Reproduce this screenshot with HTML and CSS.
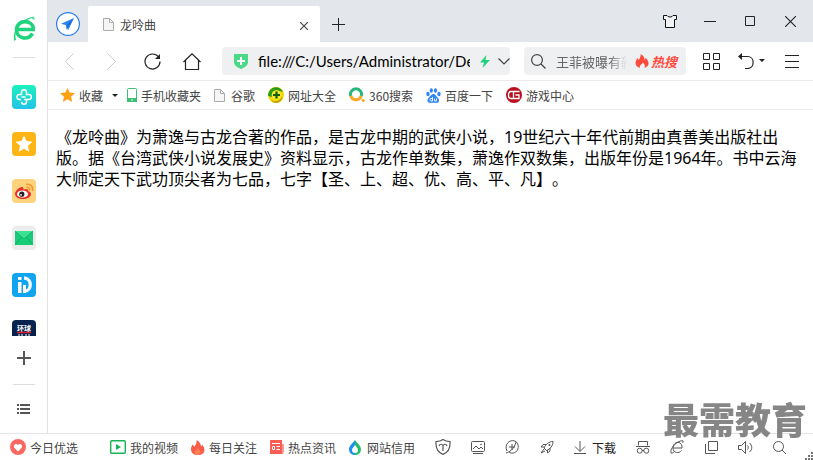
FILE: index.html
```html
<!DOCTYPE html>
<html lang="zh-CN">
<head>
  <meta charset="UTF-8">
  <title>龙呤曲</title>
  <link rel="stylesheet" href="styles.css">
</head>
<body>
  <div class="workspace">
    <aside class="sidebar">
      <div class="logo">
        <svg width="22" height="26" viewBox="0 0 22 26"><path d="M5 13.500h15.500C20 3 4 3 3.500 13.500 3.200 22.500 15 25 19.500 17.500" fill="none" stroke="#1fd47c" stroke-width="3.600"/><path d="M1.500 25C-2 17 8 2.500 20 .8c1.500.5 1.800 2 1 3.700-.3-2.300-2-2.600-4-1.700C9 5.500 0 15.500 3 23.500z" fill="#1fd47c"/></svg>
      </div>
      <div class="divider"></div>
      <nav class="apps">
        <button class="app" aria-label="医疗">
          <svg width="24" height="24" viewBox="0 0 24 24"><defs><linearGradient id="med" x2="0" y2="1"><stop stop-color="#1df0bd"/><stop offset="1" stop-color="#1fc3e8"/></linearGradient></defs><rect width="24" height="24" rx="4" fill="url(#med)"/><path d="M9 14.500H7.500a2.500 2.500 0 0 1 0-5h2V7.200a2.500 2.500 0 0 1 5 0v2.300h2.300a2.500 2.500 0 0 1 0 5h-2.300v2.300a2.500 2.500 0 0 1-5 0M9.500 12h4M14.500 14.500h-2.500" fill="none" stroke="#fff" stroke-width="1.500"/></svg>
        </button>
        <button class="app" aria-label="收藏夹">
          <svg width="24" height="24" viewBox="0 0 24 24"><rect width="24" height="24" rx="4" fill="#fdb515"/><path d="M12 3.500l2.500 5.600 6 .7-4.500 4 1.200 6L12 16.800l-5.200 3 1.200-6-4.500-4 6-.7z" fill="#fff"/></svg>
        </button>
        <button class="app" aria-label="微博">
          <svg width="24" height="24" viewBox="0 0 24 24"><rect width="24" height="24" rx="4" fill="#ffd27d"/><path d="M3 15c0-3 4-7 7-7 1.500 0 1.700 1.500 1.300 2.500 2.500-1 5.200-1 4.700 1.500 2 .5 3 1.500 3 3 0 3-4 5-8 5s-8-2-8-5z" fill="#e6322b"/><ellipse cx="10.500" cy="15" rx="5.500" ry="3.600" fill="#fff"/><circle cx="9.800" cy="15.200" r="2.600" fill="#222"/><circle cx="9" cy="15.800" r=".9" fill="#fff"/><path d="M14 5.500c4-1 7.500 2 6.500 6.500M14.500 8.500c2.200-.3 3.500 1 3 3" fill="none" stroke="#f0992c" stroke-width="1.600"/></svg>
        </button>
        <button class="app" aria-label="邮件">
          <svg width="24" height="24" viewBox="0 0 24 24"><rect width="24" height="24" rx="4" fill="#ececec"/><path d="M3 5h18v14H3z" fill="#18cd78"/><path d="M3 5h18l-9 8z" fill="#3be292"/><path d="M3 5l9 8 9-8M3 19l6.500-8M21 19l-6.500-8" fill="none" stroke="#10a961" stroke-width=".8"/></svg>
        </button>
        <button class="app" aria-label="iD">
          <svg width="24" height="24" viewBox="0 0 24 24"><rect width="24" height="24" rx="4" fill="#11a4f0"/><path d="M6 4h3.500v3H6zM6 9h3.500v11H6zM11 12h3v8h-3z" fill="#fff"/><path d="M12 5.200h1c7 .8 7 12 0 13" fill="none" stroke="#fff" stroke-width="3.200"/></svg>
        </button>
        <button class="app" aria-label="环球时报">
          <svg width="24" height="24" viewBox="0 0 24 24"><rect width="24" height="24" rx="4" fill="#07234d"/><text class="paper" x="5" y="11">环球</text><path d="M7 14v2M10 14v2M14 14v2M17 14v2" stroke="#fff"/><path d="M5 12.500h14" stroke="#e51c2c" stroke-width="1.500"/></svg>
        </button>
      </nav>
      <button class="side-add" aria-label="添加">
        <svg width="14" height="14" viewBox="0 0 14 14"><path d="M7 0v14M0 7h14" stroke="#555" stroke-width="2"/></svg>
      </button>
      <div class="divider"></div>
      <button class="side-list" aria-label="列表">
        <svg width="13" height="10" viewBox="0 0 13 10"><path d="M0 1h2M3 1h10M0 5h2M3 5h10M0 9h2M3 9h10" stroke="#555" stroke-width="2"/></svg>
      </button>
    </aside>

    <div class="browser">
      <header class="tabbar">
        <button class="compass" aria-label="导航">
          <svg width="24" height="24" viewBox="0 0 24 24"><circle cx="12" cy="12" r="11.400" fill="#fff" stroke="#2b7de9" stroke-width="1.200"/><path d="M18 6L5 11.800l5.300 1.500L12 18.500z" fill="#2b86f5"/><path d="M18 6l-7.700 7.300v4.200l2.500-3z" fill="#1b6bdc"/></svg>
        </button>
        <div class="tab">
          <svg width="11" height="13" viewBox="0 0 11 13"><path d="M.5.500h6l4 4v8H.500zM6.500.500v4h4" fill="#f6f6f6" stroke="#aaa"/></svg>
          <span class="tab-title">龙呤曲</span>
          <button class="tab-close" aria-label="关闭标签">
            <svg width="8" height="8" viewBox="0 0 8 8"><path d="M0 0l8 8M8 0L0 8" stroke="#444" stroke-width="1.100"/></svg>
          </button>
        </div>
        <button class="new-tab" aria-label="新标签">
          <svg width="13" height="13" viewBox="0 0 13 13"><path d="M6.500 0v13M0 6.500h13" stroke="#222"/></svg>
        </button>
        <div class="window-controls">
          <button aria-label="皮肤"><svg width="14" height="13" viewBox="0 0 14 13"><path d="M.5.500h3.500c.5 2 5.500 2 6 0h3.500v4h-2v8h-9v-8h-2z" fill="#f3f4f6" stroke="#111"/></svg></button>
          <button aria-label="最小化"><svg width="12" height="11" viewBox="0 0 12 11"><path d="M0 5.500h12" stroke="#222"/></svg></button>
          <button aria-label="最大化"><svg width="10" height="10" viewBox="0 0 10 10"><path d="M.5.500h9v9h-9z" fill="none" stroke="#222"/></svg></button>
          <button aria-label="关闭"><svg width="11" height="11" viewBox="0 0 11 11"><path d="M0 0l11 11M11 0L0 11" stroke="#222" stroke-width="1.100"/></svg></button>
        </div>
      </header>

      <div class="toolbar">
        <button class="nav-btn" aria-label="后退"><svg width="9" height="17" viewBox="0 0 9 17"><path d="M8.500.500l-8 8 8 8" fill="none" stroke="#ccc"/></svg></button>
        <button class="nav-btn" aria-label="前进"><svg width="9" height="17" viewBox="0 0 9 17"><path d="M.5.500l8 8-8 8" fill="none" stroke="#ccc"/></svg></button>
        <button class="nav-btn narrow" aria-label="刷新"><svg width="17" height="17" viewBox="0 0 17 17"><path d="M14.500 4A7.500 7.500 0 1 0 16 8.500" fill="none" stroke="#222" stroke-width="1.200"/><path d="M16 1v5h-5z" fill="#222"/></svg></button>
        <button class="nav-btn narrow" aria-label="主页"><svg width="18" height="17" viewBox="0 0 18 17"><path d="M.5 9L9 .8 17.500 9M2.500 7.500v9h13v-9" fill="none" stroke="#222" stroke-width="1.200"/></svg></button>
        <div class="address">
          <svg width="14" height="16" viewBox="0 0 14 16"><path d="M0 1h14v8c0 4-4 5.500-7 7-3-1.500-7-3-7-7z" fill="#4bd987"/><path d="M7 4v8M3 8h8" stroke="#fff" stroke-width="2"/></svg>
          <input class="url" type="text" aria-label="地址" value="file:///C:/Users/Administrator/Desktop">
          <svg width="10" height="13" viewBox="0 0 10 13"><path d="M6.500 0L0 7.500h4L2.500 13 10 5H5.500z" fill="#1fd07c"/></svg>
          <button class="drop" aria-label="展开"><svg width="12" height="7" viewBox="0 0 12 7"><path d="M.5.500L6 6l5.500-5.500" fill="none" stroke="#444" stroke-width="1.200"/></svg></button>
        </div>
        <div class="search">
          <svg width="15" height="15" viewBox="0 0 15 15"><circle cx="6" cy="6" r="5.400" fill="none" stroke="#444" stroke-width="1.200"/><path d="M10 10l4.500 4.500" stroke="#444" stroke-width="1.200"/></svg>
          <input class="query" type="text" aria-label="搜索" value="王菲被曝有新">
          <a class="hot" href="#">
            <svg width="14" height="14" viewBox="0 0 14 14"><path d="M5 14C1 13 0 10 .8 7.500 1.500 6 2 5.500 1.800 4c1 .5 1.500 1 1.700 2C5 4.500 6 2.500 5.500 0c3 1.500 4 3.500 4 6 .8-.5 1.200-1.300 1-2.500 4 4 4.500 8.500-1 10.500 1-2.500 0-4-2-5.500C8 10.500 4 10.500 5 14z" fill="#ff4b3e"/></svg>热搜
          </a>
        </div>
        <button class="tool-btn" aria-label="扩展"><svg width="17" height="17" viewBox="0 0 17 17"><path d="M.5.500h6v6h-6zM10.500.500h6v6h-6zM.5 10.500h6v6h-6zM10.500 10.500h6v6h-6z" fill="none" stroke="#222"/></svg></button>
        <button class="tool-btn" aria-label="恢复">
          <svg width="27" height="16" viewBox="0 0 27 16"><path d="M2 3.500h7.500c7.500 0 7.500 12 0 12H7" fill="none" stroke="#222" stroke-width="1.200"/><path d="M0 3.500L4 0v7zM21 6h6l-3 3z" fill="#222"/></svg>
        </button>
        <button class="tool-btn" aria-label="菜单"><svg width="14" height="13" viewBox="0 0 14 13"><path d="M0 .5h14M0 6.500h14M0 12.500h14" stroke="#222"/></svg></button>
      </div>

      <nav class="bookmarks">
        <a href="#"><svg width="15" height="14" viewBox="0 0 15 14"><path d="M7.500 0l2.200 4.600 5.300.6-4 3.500 1.200 5.300-4.700-2.700L2.800 14 4 8.700 0 5.200l5.300-.6z" fill="#ffa114"/></svg>收藏</a>
        <button class="caret" aria-label="更多收藏"><svg width="6" height="3" viewBox="0 0 6 3"><path d="M0 0h6L3 3z" fill="#222"/></svg></button>
        <a href="#"><svg width="10" height="14" viewBox="0 0 10 14"><rect x=".5" y=".5" width="9" height="13" rx="1" fill="#fff" stroke="#3bbf72"/><path d="M0 10h10v4H0z" fill="#3bbf72"/><path d="M4 12h2" stroke="#fff"/></svg>手机收藏夹</a>
        <a class="page-link" href="#"><svg width="11" height="13" viewBox="0 0 11 13"><path d="M.5.500h6l4 4v8H.500zM6.500.500v4h4" fill="#f6f6f6" stroke="#aaa"/></svg>谷歌</a>
        <a href="#"><svg width="16" height="16" viewBox="0 0 16 16"><circle cx="8" cy="8" r="8" fill="#f6d800"/><path d="M3 2c4-3 10-2 12 3l-4-1C7 3 4 6 4 10L0 9c0-3 1-5 3-7z" fill="#2c9b16"/><path d="M3 13c5 3 10 0 11-4 1 3-2 7-6 7-2 0-4-1-5-3z" fill="#bda400"/><circle cx="8.500" cy="8" r="4.800" fill="#f9e82a"/><path d="M8.500 4.500v7M5 8h7" stroke="#145b10" stroke-width="2.200"/></svg>网址大全</a>
        <a href="#"><svg width="16" height="16" viewBox="0 0 16 16"><path d="M1.800 9A5.500 5.500 0 1 1 12.200 9" fill="none" stroke="#26b779" stroke-width="3"/><path d="M1.800 9a5.500 5.500 0 0 0 10.400 0" fill="none" stroke="#ffa526" stroke-width="3"/><circle cx="14.200" cy="13.500" r="1.500" fill="#ffa526"/></svg>360搜索</a>
        <a href="#"><svg width="15" height="15" viewBox="0 0 15 15"><g fill="#2f85f5"><ellipse cx="2" cy="6" rx="1.700" ry="2.200"/><ellipse cx="5.300" cy="2.500" rx="1.600" ry="2.300"/><ellipse cx="9.500" cy="2.500" rx="1.600" ry="2.300"/><ellipse cx="13" cy="6" rx="1.700" ry="2.200"/><path d="M7.500 6c2 0 2 2 4.500 4 2 2 1 5-1.500 5-2 0-4-.5-6 0-3 0-4-3-2-5s3-4 5-4z"/></g><path d="M6.500 9v4H5c-1.500 0-1.500-2.500 0-2.500h1.500M8.500 10.500V13h2v-2.500" fill="none" stroke="#fff" stroke-width=".9"/></svg>百度一下</a>
        <a href="#"><svg width="16" height="16" viewBox="0 0 16 16"><circle cx="8" cy="8" r="8" fill="#b8101f"/><path d="M8 4.500H4.500C3 4.500 2.500 6 2.500 8s.5 3.500 2 3.500H8M13.500 4.500H7.500v7h5.500V8H9.500" fill="none" stroke="#fff" stroke-width="1.300"/></svg>游戏中心</a>
      </nav>

      <main class="page">
        <p>《龙呤曲》为萧逸与古龙合著的作品，是古龙中期的武侠小说，19世纪六十年代前期由真善美出版社出版。据《台湾武侠小说发展史》资料显示，古龙作单数集，萧逸作双数集，出版年份是1964年。书中云海大师定天下武功顶尖者为七品，七字【圣、上、超、优、高、平、凡】。</p>
      </main>
    </div>
  </div>

  <footer class="statusbar">
    <div class="feeds">
      <a class="pick" href="#"><svg width="16" height="16" viewBox="0 0 16 16"><circle cx="8" cy="8" r="8" fill="#fa6860"/><path d="M8 12.500L4.500 9C2.500 6.500 6 3.500 8 6c2-2.500 5.500.500 3.500 3z" fill="#fff"/></svg>今日优选</a>
      <a href="#"><svg width="16" height="14" viewBox="0 0 16 14"><rect x=".7" y=".7" width="14.600" height="12.600" rx="1" fill="#fff" stroke="#14b456" stroke-width="1.400"/><path d="M6 4l5 3-5 3z" fill="#14b456"/></svg>我的视频</a>
      <a href="#"><svg width="14" height="15" viewBox="0 0 14 15"><path d="M5 15C1 14 0 11 0 9c0-2 1-3 1.500-4.500C2.500 5 3 6 3 7c2-2 3-4.500 2.500-7 3 1.500 4.500 4 4.500 6.500.7-.5 1-1 1-2 4 4.500 3 9-2 10.500z" fill="#fb5b48"/><path d="M4 14c-1-3 1-4 3-6 2 2 4 4 2 6-1 1.500-4 1.500-5 0z" fill="#ff8052"/></svg>每日关注</a>
      <a href="#"><svg width="14" height="14" viewBox="0 0 14 14"><path d="M11 4h3v8l-1 2h-2z" fill="#ff9d95"/><path d="M0 0h12v14H0z" fill="#fb5d55"/><path d="M2 3.500h8M6.500 6.500H10M6.500 9.500H10" stroke="#fff" stroke-width="1.200"/><path d="M2.500 6.500h2v3h-2z" fill="none" stroke="#fff"/></svg>热点资讯</a>
      <a class="credit" href="#"><svg width="12" height="15" viewBox="0 0 12 15"><path d="M6 0C3 4 0 6 0 9.500A6 5.500 0 0 0 6 15z" fill="#1e8df5"/><path d="M6 0c3 4 6 6 6 9.500A6 5.500 0 0 1 6 15z" fill="#22bd68"/><path d="M6 5c-2 2.500-3 3.500-3 5a3 3 0 0 0 6 0c0-1.500-1-2.500-3-5z" fill="#fff"/></svg>网站信用</a>
    </div>
    <div class="tools">
      <button aria-label="安全"><svg width="16" height="16" viewBox="0 0 16 16"><path d="M8 .6c2 1.400 4.500 2 7 2C15.500 9 13 13.500 8 15.400 3 13.500.500 9 1 2.600c2.500 0 5-.6 7-2zM8 12V6M4 7c1-2.500 3-2 4-.5 1-1.500 3-2 4 .5" fill="none" stroke="#555" stroke-width="1.200"/></svg></button>
      <button aria-label="图片"><svg width="14" height="13" viewBox="0 0 14 13"><rect x=".5" y=".5" width="13" height="10" rx="1" fill="none" stroke="#555"/><path d="M2 8l3-3 3 3 2-2 2 2M2 12.500h10" fill="none" stroke="#555"/><circle cx="10" cy="3.500" r=".8" fill="#555"/></svg></button>
      <button aria-label="加速"><svg width="14" height="14" viewBox="0 0 14 14"><path d="M2 11C-1 5 4-1 10 1c5 3 4 10-1 12-2 .5-4 0-5-1M1 13C4 12 9 10 11 2M7 4v6M4 7h6" fill="none" stroke="#555"/></svg></button>
      <button aria-label="火箭"><svg width="14" height="13" viewBox="0 0 14 13"><path d="M13 .5C9 .5 6 3 4 7l2.500 2.500C10 8 13 5 13 .5zM6.500 3.500H3L1 6h3.500M10 7v3L7.500 12V9M4 8L1 12l4-2" fill="none" stroke="#555"/><circle cx="9.500" cy="4" r="1" fill="#555"/></svg></button>
      <button class="download"><svg width="12" height="13" viewBox="0 0 12 13"><path d="M6 0v10M1 5.500l5 5 5-5M0 12.500h12" fill="none" stroke="#555"/></svg>下载</button>
      <button aria-label="无痕"><svg width="14" height="13" viewBox="0 0 14 13"><path d="M2.500 4.500v-4h9v4M0 5.500h14M6 9.500h2" fill="none" stroke="#555"/><circle cx="3.700" cy="9.700" r="2.500" fill="none" stroke="#555"/><circle cx="10.300" cy="9.700" r="2.500" fill="none" stroke="#555"/></svg></button>
      <button aria-label="内核"><svg width="14" height="14" viewBox="0 0 14 14"><path d="M3 8h9c.5-8-9-7-9 0 0 5 6 6 8.500 2.500M1 13C-.5 9 7 0 13 .8c.5.700 0 1.500-.5 2.200M1 13c1 .5 2-.2 3-1" fill="none" stroke="#555"/></svg></button>
      <button aria-label="分屏"><svg width="13" height="13" viewBox="0 0 13 13"><path d="M3.500.500h9v9h-9zM.5 3v9.500H10" fill="none" stroke="#555"/></svg></button>
      <button aria-label="声音"><svg width="15" height="13" viewBox="0 0 15 13"><path d="M.5 4.500h3l4-4v12l-4-4h-3zM9.500 4.500c1 1 1 3 0 4M11.500 2c3 2.500 3 6.500 0 9" fill="none" stroke="#555"/></svg></button>
      <button aria-label="缩放"><svg width="13" height="13" viewBox="0 0 13 13"><circle cx="5.500" cy="5.500" r="5" fill="none" stroke="#555"/><path d="M9 9l4 4" stroke="#555"/></svg></button>
    </div>
    <svg class="grip" width="8" height="8" viewBox="0 0 8 8"><path d="M6 0h2v2H6zM3 3h2v2H3zM6 3h2v2H6zM0 6h2v2H0zM3 6h2v2H3zM6 6h2v2H6z" fill="#777"/></svg>
    <div class="watermark">最需教育</div>
  </footer>
</body>
</html>
```

FILE: styles.css
```css
* {
  box-sizing: border-box;
}
body {
  margin: 0;
  height: 100vh;
  display: flex;
  flex-direction: column;
  overflow: hidden;
  background: #fff;
  color: #444;
  font-family: "Noto Sans CJK SC", sans-serif;
  font-size: 12px;
}
button {
  display: flex;
  align-items: center;
  justify-content: center;
  padding: 0;
  border: 0;
  background: none;
  color: inherit;
  font: inherit;
}
a {
  color: inherit;
  text-decoration: none;
}
svg {
  display: block;
  flex: none;
}
input {
  padding: 0;
  border: 0;
  outline: 0;
  background: none;
}

.workspace {
  flex: 1;
  min-height: 0;
  display: flex;
}

/* left app strip */
.sidebar {
  width: 48px;
  flex: none;
  display: flex;
  flex-direction: column;
  align-items: center;
  border-right: 1px solid #e2e2e2;
}
.logo {
  padding: 16px 0 15px;
}
.divider {
  width: 22px;
  height: 1px;
  flex: none;
  background: #ddd;
}
.apps {
  flex: 1;
  min-height: 0;
  margin-top: 27px;
  overflow: hidden;
  display: flex;
  flex-direction: column;
  gap: 23px;
}
.app {
  flex: none;
}
.paper {
  fill: #fff;
  font-size: 7px;
  font-weight: bold;
}
.side-add {
  width: 46px;
  height: 44px;
  margin-bottom: 4px;
}
.side-list {
  width: 46px;
  height: 48px;
}

.browser {
  flex: 1;
  min-width: 0;
}

/* tabs */
.tabbar {
  height: 42px;
  display: flex;
  background: #e3e6eb;
}
.compass {
  width: 40px;
  padding-top: 6px;
}
.tab {
  width: 232px;
  margin-top: 6px;
  padding: 0 12px 0 15px;
  display: flex;
  align-items: center;
  gap: 6px;
  border-radius: 2px 2px 0 0;
  background: #fff;
}
.tab-title {
  flex: 1;
}
.tab-close {
  padding-top: 4px;
}
.new-tab {
  width: 36px;
  padding-top: 6px;
}
.window-controls {
  margin-left: auto;
  padding-right: 3px;
  display: flex;
}
.window-controls button {
  width: 40px;
}

/* address row */
.toolbar {
  height: 39px;
  display: flex;
  align-items: center;
  border-bottom: 1px solid #ebebeb;
}
.nav-btn {
  width: 42px;
  height: 38px;
}
.nav-btn.narrow {
  width: 40px;
}
.address,
.search {
  height: 28px;
  display: flex;
  align-items: center;
  border-radius: 4px;
  background: #eff0f2;
}
.address {
  flex: 1;
  min-width: 0;
  margin: 0 14px 0 10px;
  padding-left: 12px;
}
.url {
  flex: 1;
  min-width: 0;
  margin: 0 10px;
  color: #000;
  font: 15px Lato, sans-serif;
}
.drop {
  margin-left: 8px;
}
.search {
  width: 162px;
  padding: 0 9px 0 7px;
}
.query {
  flex: 1;
  min-width: 0;
  margin: 0 8px 0 10px;
  color: #666;
  font: 13px "Noto Sans CJK SC", sans-serif;
  -webkit-mask-image: linear-gradient(to right, #000 75%, transparent);
  mask-image: linear-gradient(to right, #000 75%, transparent);
}
.hot {
  display: flex;
  align-items: center;
  gap: 2px;
  color: #ff4b3e;
  font-size: 13px;
  font-weight: bold;
  font-style: italic;
}
.tool-btn {
  width: 40px;
  height: 38px;
}
.tool-btn:last-child {
  width: 42px;
}
.search + .tool-btn {
  margin-left: 5px;
}

/* bookmarks */
.bookmarks {
  height: 29px;
  padding-left: 12px;
  display: flex;
  align-items: center;
  gap: 13px;
  border-bottom: 1px solid #ebebeb;
}
.bookmarks a,
.feeds a {
  display: flex;
  align-items: center;
  gap: 4px;
  white-space: nowrap;
}
.caret {
  width: 6px;
  margin: 0 -4px;
}
.bookmarks .page-link {
  gap: 6px;
}

.page {
  padding: 17px 8px;
}
.page p {
  margin: 0;
  color: #000;
  font-family: "Noto Sans", "Noto Sans CJK SC", sans-serif;
  font-size: 16px;
  line-height: 21px;
  text-spacing-trim: space-all;
}

/* bottom bar */
.statusbar {
  position: relative;
  height: 27px;
  flex: none;
  padding-left: 10px;
  display: flex;
  align-items: center;
  border-top: 1px solid #e6e6e6;
}
.feeds {
  display: flex;
  gap: 13px;
}
.feeds .pick {
  margin-right: 19px;
}
.feeds .credit {
  gap: 6px;
}
.tools {
  flex: 1;
  margin: 0 19px 0 20px;
  display: flex;
  align-items: center;
  justify-content: space-between;
}
.tools .download {
  gap: 6px;
  color: #222;
}
.grip {
  align-self: flex-end;
}
.watermark {
  position: absolute;
  right: 6px;
  bottom: 22px;
  color: #808080;
  font-size: 36px;
  font-weight: 900;
  line-height: 40px;
  opacity: 0.95;
}
```
